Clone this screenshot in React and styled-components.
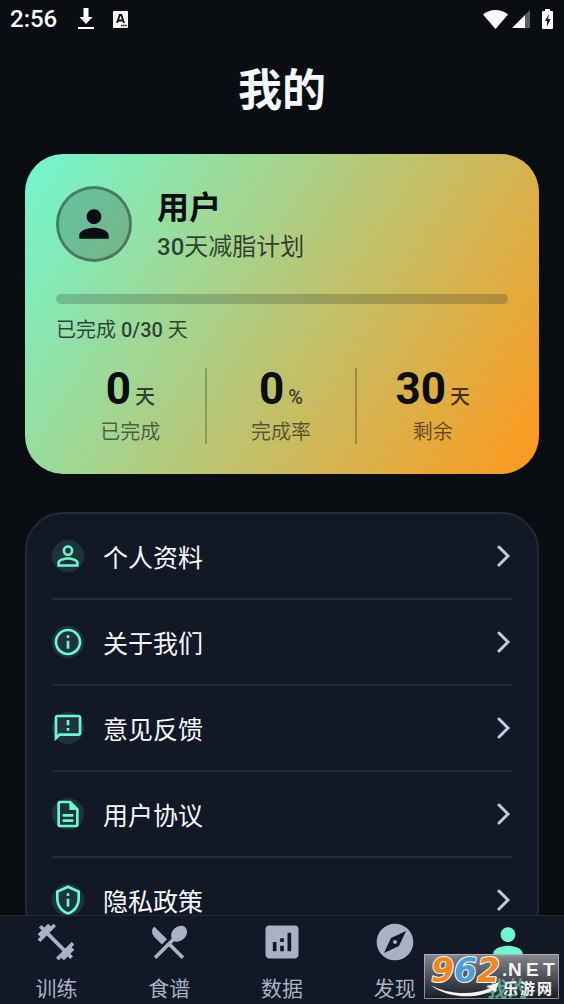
import React from 'react'
import styled, { createGlobalStyle } from 'styled-components'
import {
    MdPerson,
    MdPersonOutline,
    MdInfoOutline,
    MdOutlineFeedback,
    MdOutlineDescription,
    MdOutlinePrivacyTip,
    MdFitnessCenter,
    MdRestaurantMenu,
    MdAnalytics,
    MdExplore
} from 'react-icons/md'

const stats = [
    { value: '0', unit: '天', label: '已完成' },
    { value: '0', unit: '%', label: '完成率' },
    { value: '30', unit: '天', label: '剩余' }
]

const menu = [
    { text: '个人资料', Icon: MdPersonOutline },
    { text: '关于我们', Icon: MdInfoOutline },
    { text: '意见反馈', Icon: MdOutlineFeedback },
    { text: '用户协议', Icon: MdOutlineDescription },
    { text: '隐私政策', Icon: MdOutlinePrivacyTip }
]

const tabs = [
    { text: '训练', Icon: MdFitnessCenter },
    { text: '食谱', Icon: MdRestaurantMenu },
    { text: '数据', Icon: MdAnalytics },
    { text: '发现', Icon: MdExplore },
    { text: '我的', Icon: MdPerson, active: true }
]

function StatusBar() {
    return (
        <Status>
            <Clock>2:56</Clock>
            <svg width="16" height="22" viewBox="0 0 16 22" fill="#fff">
                <path d="M5.5 0h5v9h4L8 16 1.5 9h4zM0 19h16v2H0z" />
            </svg>
            <svg width="15" height="17" viewBox="0 0 15 17">
                <rect width="15" height="17" rx="1" fill="#fff" />
                <path d="M4 12 6.7 4h1.6L11 12M5 9.5h5" fill="none" stroke="#0a0d12" strokeWidth="1.9" />
                <path d="M8 14.5h6" stroke="#0a0d12" strokeWidth="1.5" strokeDasharray="1.5 .6" />
            </svg>
            <StatusRight>
                <svg width="25" height="19" viewBox="0 0 25 19" fill="#fff">
                    <path d="M0 4.5C3.5 1.5 8 0 12.5 0S21.5 1.5 25 4.5L12.5 19z" />
                </svg>
                <svg width="18" height="18" viewBox="0 0 18 18">
                    <path d="M13 5v13H0z" fill="#fff" />
                    <path d="M13 5l5-5v18h-5z" fill="#5b5d61" />
                </svg>
                <svg width="11" height="20" viewBox="0 0 11 20">
                    <path d="M3 0h5v2h2a1 1 0 0 1 1 1v16a1 1 0 0 1-1 1H1a1 1 0 0 1-1-1V3a1 1 0 0 1 1-1h2z" fill="#fff" />
                    <path d="M7 5 3 12h2v5.5L8.5 10H6z" fill="#0a0d12" />
                </svg>
            </StatusRight>
        </Status>
    )
}

function Plan() {
    return (
        <PlanCard>
            <Profile>
                <Avatar><MdPerson size={44} /></Avatar>
                <ProfileText>
                    <UserName>用户</UserName>
                    <PlanName><b>30</b>天减脂计划</PlanName>
                </ProfileText>
            </Profile>
            <Progress id="progress" value="0" max="30" />
            <ProgressLabel htmlFor="progress">已完成 <b>0/30</b> 天</ProgressLabel>
            <Stats>
                {stats.map(({ value, unit, label }) => (
                    <Stat key={label}>
                        <StatValue>{value}<Unit>{unit}</Unit></StatValue>
                        <StatLabel>{label}</StatLabel>
                    </Stat>
                ))}
            </Stats>
        </PlanCard>
    )
}

function Watermark() {
    return (
        <Mark>
            <svg width="135" height="45" viewBox="0 0 135 45">
                <text x="7" y="28" fontFamily="'DejaVu Sans', sans-serif" fontWeight="700" fontStyle="italic" fontSize="33" stroke="#fff" strokeWidth="2" strokeLinejoin="round" paintOrder="stroke">
                    <tspan fill="#f0861c">9</tspan>
                    <tspan fill="#4a9fdc">6</tspan>
                    <tspan fill="#f0861c">2</tspan>
                </text>
                <path d="M7 31c14 9 42 11 59 3l-4-1 13-5-4 11-2-3C53 46 21 44 7 31z" fill="#f4f4f4" />
                <g fill="#f4f4f4" fontWeight="700" fontFamily="'Liberation Sans', 'Noto Sans CJK SC', sans-serif">
                    <text x="78" y="22" fontSize="19">.</text>
                    <text x="84" y="22" fontSize="19">N</text>
                    <text x="102" y="22" fontSize="19">E</text>
                    <text x="119" y="22" fontSize="19">T</text>
                    <text x="79" y="40" fontSize="15">乐</text>
                    <text x="96" y="40" fontSize="15">游</text>
                    <text x="113" y="40" fontSize="15">网</text>
                </g>
            </svg>
        </Mark>
    )
}

function App() {
    return (
        <Screen>
            <GlobalStyle />
            <StatusBar />
            <Content>
                <Title>我的</Title>
                <Plan />
                <Menu>
                    {menu.map(({ text, Icon }) => (
                        <MenuItem key={text}>
                            <IconCircle><Icon size={32} /></IconCircle>
                            <span>{text}</span>
                            <Chevron width="15" height="22" viewBox="0 0 15 22">
                                <path d="M2 2l9 9-9 9" />
                            </Chevron>
                        </MenuItem>
                    ))}
                </Menu>
            </Content>
            <TabBar>
                {tabs.map(({ text, Icon, active }) => (
                    <Tab key={text} href="#" $active={active}>
                        <Icon size={44} />
                        {text}
                    </Tab>
                ))}
            </TabBar>
            <Watermark />
        </Screen>
    )
}

export default App

const GlobalStyle = createGlobalStyle`
    * {
        box-sizing: border-box;
    }
    body {
        margin: 0;
        background: #0a0d12;
        font-family: Roboto, "Noto Sans CJK SC", sans-serif;
    }
    svg {
        display: block;
        flex-shrink: 0;
    }
`

const Screen = styled.div`
    position: relative;
    height: 100vh;
    display: flex;
    flex-direction: column;
    color: #f5f8ff;
`

const Status = styled.header`
    height: 38px;
    padding: 0 11px 0 10px;
    display: flex;
    align-items: center;
    gap: 19px;
    flex-shrink: 0;
`

const Clock = styled.span`
    margin-right: 2px;
    font-size: 24px;
    font-weight: 500;
    color: #fff;
`

const StatusRight = styled.div`
    margin-left: auto;
    display: flex;
    align-items: center;
    gap: 4px;

    svg:last-child {
        margin-left: 8px;
    }
`

const Content = styled.main`
    flex: 1;
    min-height: 0;
    overflow: hidden;
    padding: 0 25px;
`

const Title = styled.h1`
    margin: 0;
    height: 116px;
    padding-top: 21px;
    font-size: 44px;
    line-height: 64px;
    font-weight: 700;
    text-align: center;
`

const PlanCard = styled.section`
    padding: 32px 31px 30px;
    border-radius: 38px;
    background: linear-gradient(122deg, #70f7d0, #ff981c);
    color: #0a0d12;
`

const Profile = styled.div`
    height: 76px;
    display: flex;
    gap: 25px;
`

const Avatar = styled.div`
    width: 76px;
    height: 76px;
    display: flex;
    align-items: center;
    justify-content: center;
    border: 3px solid rgba(10, 13, 18, 0.5);
    border-radius: 50%;
    background: rgba(10, 13, 18, 0.2);
    background-clip: padding-box;
`

const ProfileText = styled.div`
    padding-top: 2px;
`

const UserName = styled.h2`
    margin: 0;
    font-size: 32px;
    line-height: 40px;
    font-weight: 700;
`

const PlanName = styled.p`
    margin: 0;
    font-size: 24px;
    line-height: 38px;
    color: rgba(10, 13, 18, 0.75);

    b {
        font-weight: 500;
    }
`

const Progress = styled.progress`
    appearance: none;
    display: block;
    width: 100%;
    height: 10px;
    margin: 32px 0 11px;
    border: 0;
    border-radius: 5px;
    overflow: hidden;
    background: rgba(10, 13, 18, 0.2);

    &::-webkit-progress-bar {
        background: transparent;
    }
    &::-webkit-progress-value {
        background: #0a0d12;
    }
`

const ProgressLabel = styled.label`
    display: block;
    font-size: 20px;
    line-height: 30px;
    color: rgba(10, 13, 18, 0.75);

    b {
        font-weight: 500;
    }
`

const Stats = styled.div`
    margin-top: 23px;
    display: grid;
    grid-template-columns: repeat(3, 1fr);
`

const Stat = styled.div`
    height: 76px;
    text-align: center;
    border-right: 2px solid rgba(10, 13, 18, 0.25);

    &:last-child {
        border-right: 0;
    }
`

const StatValue = styled.div`
    font-size: 44px;
    line-height: 42px;
    height: 49px;
    font-weight: 700;
`

const Unit = styled.span`
    margin-left: 4px;
    font-size: 20px;
    font-weight: 500;
    color: rgba(10, 13, 18, 0.75);
`

const StatLabel = styled.div`
    font-size: 20px;
    line-height: 30px;
    color: rgba(10, 13, 18, 0.6);
`

const Menu = styled.section`
    margin-top: 38px;
    padding: 0 25px;
    border: 2px solid #222937;
    border-radius: 38px;
    background: #121826;
`

const MenuItem = styled.button`
    width: 100%;
    height: 86px;
    padding: 0;
    display: flex;
    align-items: center;
    gap: 19px;
    border: 0;
    border-bottom: 2px solid #222937;
    background: none;
    color: inherit;
    font-family: inherit;
    font-size: 25px;
    text-align: left;
    cursor: pointer;

    &:last-child {
        border-bottom-color: transparent;
    }
`

const IconCircle = styled.span`
    border-radius: 50%;
    background: rgba(112, 247, 208, 0.13);
    color: #70f7d0;
`

const Chevron = styled.svg`
    margin-left: auto;
    fill: none;
    stroke: #c3cad9;
    stroke-width: 3;
    stroke-linecap: round;
`

const TabBar = styled.nav`
    flex-shrink: 0;
    height: 89px;
    display: flex;
    border-top: 1px solid #222937;
    background: #121826;
`

const Tab = styled.a`
    flex: 1;
    padding-top: 4px;
    display: flex;
    flex-direction: column;
    align-items: center;
    gap: 9px;
    color: ${props => (props.$active ? '#70f7d0' : '#a8b2c4')};
    font-size: 21px;
    line-height: 32px;
    font-weight: ${props => (props.$active ? 700 : 400)};
    text-decoration: none;
`

// sits over the tab bar in the corner
const Mark = styled.div`
    position: absolute;
    right: 5px;
    bottom: 5px;
    border-radius: 1px;
    background: linear-gradient(rgba(140, 142, 146, 0.95), rgba(30, 32, 38, 0.4));
    box-shadow: inset 0 0 0 1px rgba(190, 192, 196, 0.7);
`
